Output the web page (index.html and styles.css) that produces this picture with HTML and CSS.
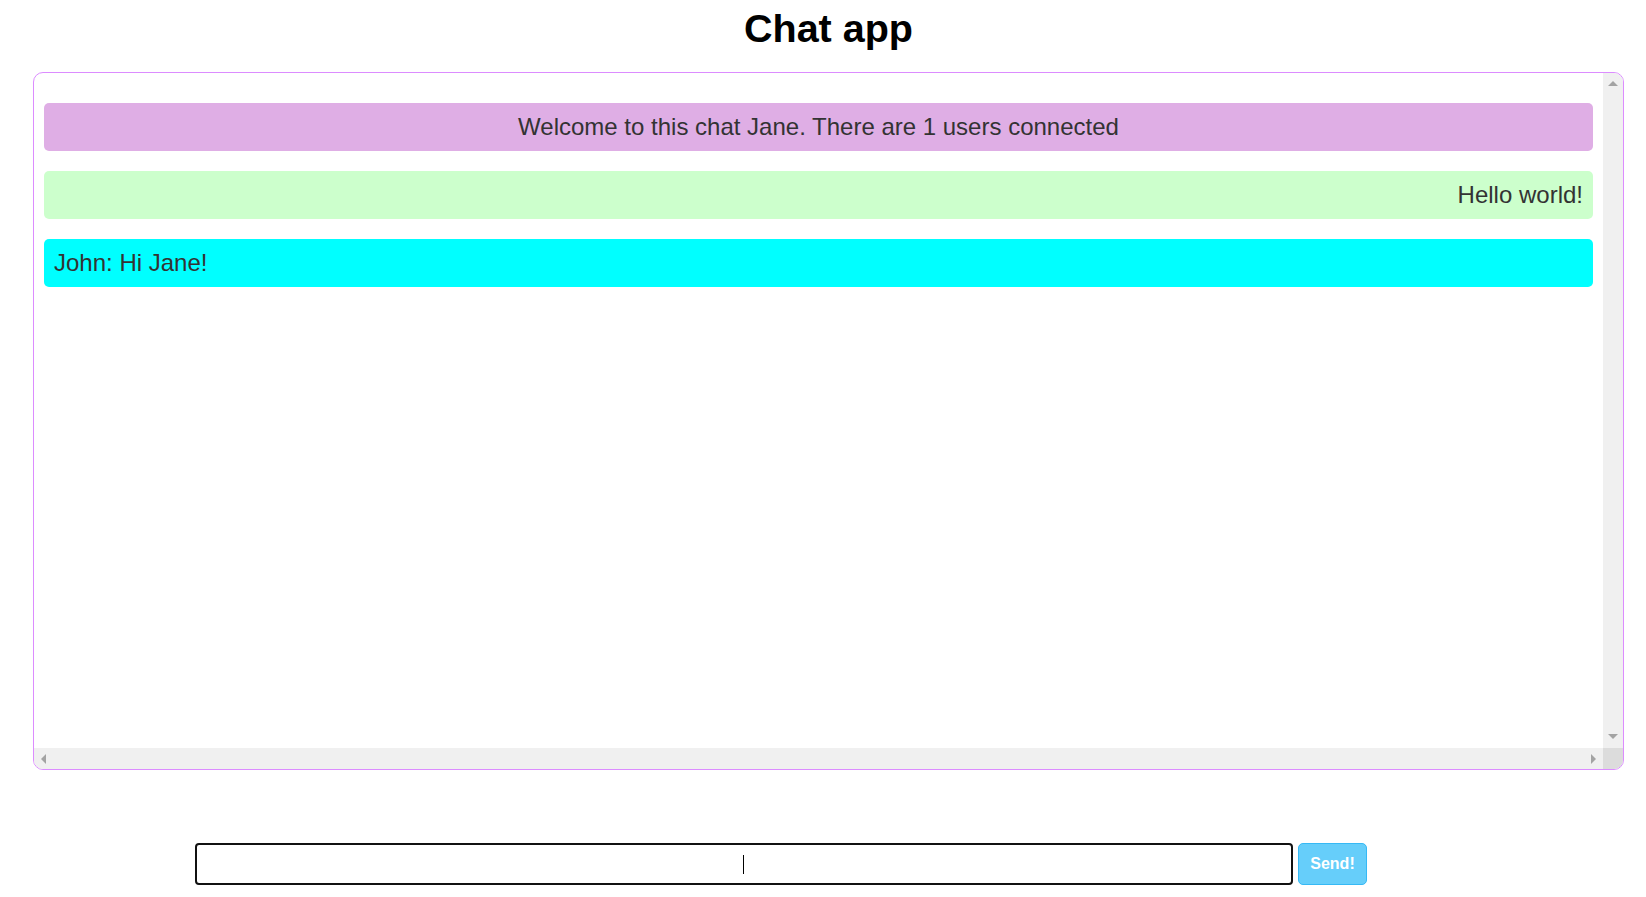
FILE: index.html
```html
<!DOCTYPE html>
<html lang="en">
<head>
<meta charset="utf-8">
<title>Chat app</title>
<link rel="stylesheet" href="styles.css">
</head>
<body>
<div class="page">
  <header class="title-bar">
    <h1 class="title">Chat app</h1>
  </header>
  <section class="chat-box">
    <div class="messages">
      <div class="msg msg-system">Welcome to this chat Jane. There are 1 users connected</div>
      <div class="msg msg-own">Hello world!</div>
      <div class="msg msg-other">John: Hi Jane!</div>
    </div>
    <div class="vbar">
      <span class="arrow arrow-up"></span>
      <span class="arrow arrow-down"></span>
    </div>
    <div class="hbar">
      <span class="arrow arrow-left"></span>
      <span class="arrow arrow-right"></span>
    </div>
    <div class="corner"></div>
  </section>
  <form class="send-form" onsubmit="return false;">
    <div class="input-wrap">
      <input class="send-input" type="text">
      <span class="caret"></span>
    </div>
    <button class="send-btn" type="submit">Send!</button>
  </form>
</div>
</body>
</html>
```

FILE: styles.css
```css
html, body {
  margin: 0;
  padding: 0;
  background: #ffffff;
}

body {
  font-family: "Liberation Sans", Arial, sans-serif;
  color: #333333;
}

.page {
  padding: 0 22px 0 33px;
}

.title-bar {
  padding: 6px 0 21px;
  text-align: center;
}

.title {
  margin: 0;
  font-size: 39.5px;
  line-height: 45px;
  font-weight: bold;
  color: #000000;
}

.chat-box {
  height: 696px;
  border: 1px solid #dc8cff;
  border-radius: 10px;
  display: grid;
  grid-template-columns: 1fr 20px;
  grid-template-rows: 1fr 21px;
  overflow: hidden;
}

.messages {
  padding: 10px;
  display: flex;
  flex-direction: column;
}

.msg {
  font-size: 24px;
  line-height: 28px;
  padding: 10px;
  border-radius: 5px;
  margin-top: 20px;
}

.msg-system {
  background: #dfaee5;
  text-align: center;
}

.msg-own {
  background: #ccffcc;
  text-align: right;
}

.msg-other {
  background: #00ffff;
  text-align: left;
}

.vbar {
  background: #f0f0f0;
  display: flex;
  flex-direction: column;
  justify-content: space-between;
  align-items: center;
  padding: 8px 0 9px;
}

.hbar {
  background: #f0f0f0;
  display: flex;
  justify-content: space-between;
  align-items: center;
  padding: 0 7px 0 7px;
}

.corner {
  background: #dcdcdc;
}

.arrow {
  width: 0;
  height: 0;
  display: block;
}

.arrow-up {
  border-left: 5px solid transparent;
  border-right: 5px solid transparent;
  border-bottom: 5px solid #a3a3a3;
}

.arrow-down {
  border-left: 5px solid transparent;
  border-right: 5px solid transparent;
  border-top: 5px solid #a3a3a3;
}

.arrow-left {
  border-top: 5px solid transparent;
  border-bottom: 5px solid transparent;
  border-right: 5px solid #a3a3a3;
}

.arrow-right {
  border-top: 5px solid transparent;
  border-bottom: 5px solid transparent;
  border-left: 5px solid #a3a3a3;
}

.send-form {
  margin: 73px 0 0;
  padding-left: 162px;
  display: flex;
  gap: 5px;
}

.input-wrap {
  position: relative;
  width: 1098px;
  height: 42px;
}

.send-input {
  box-sizing: border-box;
  width: 100%;
  height: 42px;
  border: 2px solid #111111;
  border-radius: 4px;
  text-align: center;
  font-size: 16px;
  font-family: "Liberation Sans", Arial, sans-serif;
  outline: none;
  padding: 0 4px;
  margin: 0;
}

.caret {
  position: absolute;
  left: 548px;
  top: 12px;
  width: 1px;
  height: 19px;
  background: #000000;
}

.send-btn {
  box-sizing: border-box;
  width: 69px;
  height: 42px;
  background: #66cefa;
  border: 1px solid #36b9f5;
  border-radius: 5px;
  color: #ffffff;
  font-family: "Liberation Sans", Arial, sans-serif;
  font-weight: bold;
  font-size: 16px;
  padding: 0;
}
```
